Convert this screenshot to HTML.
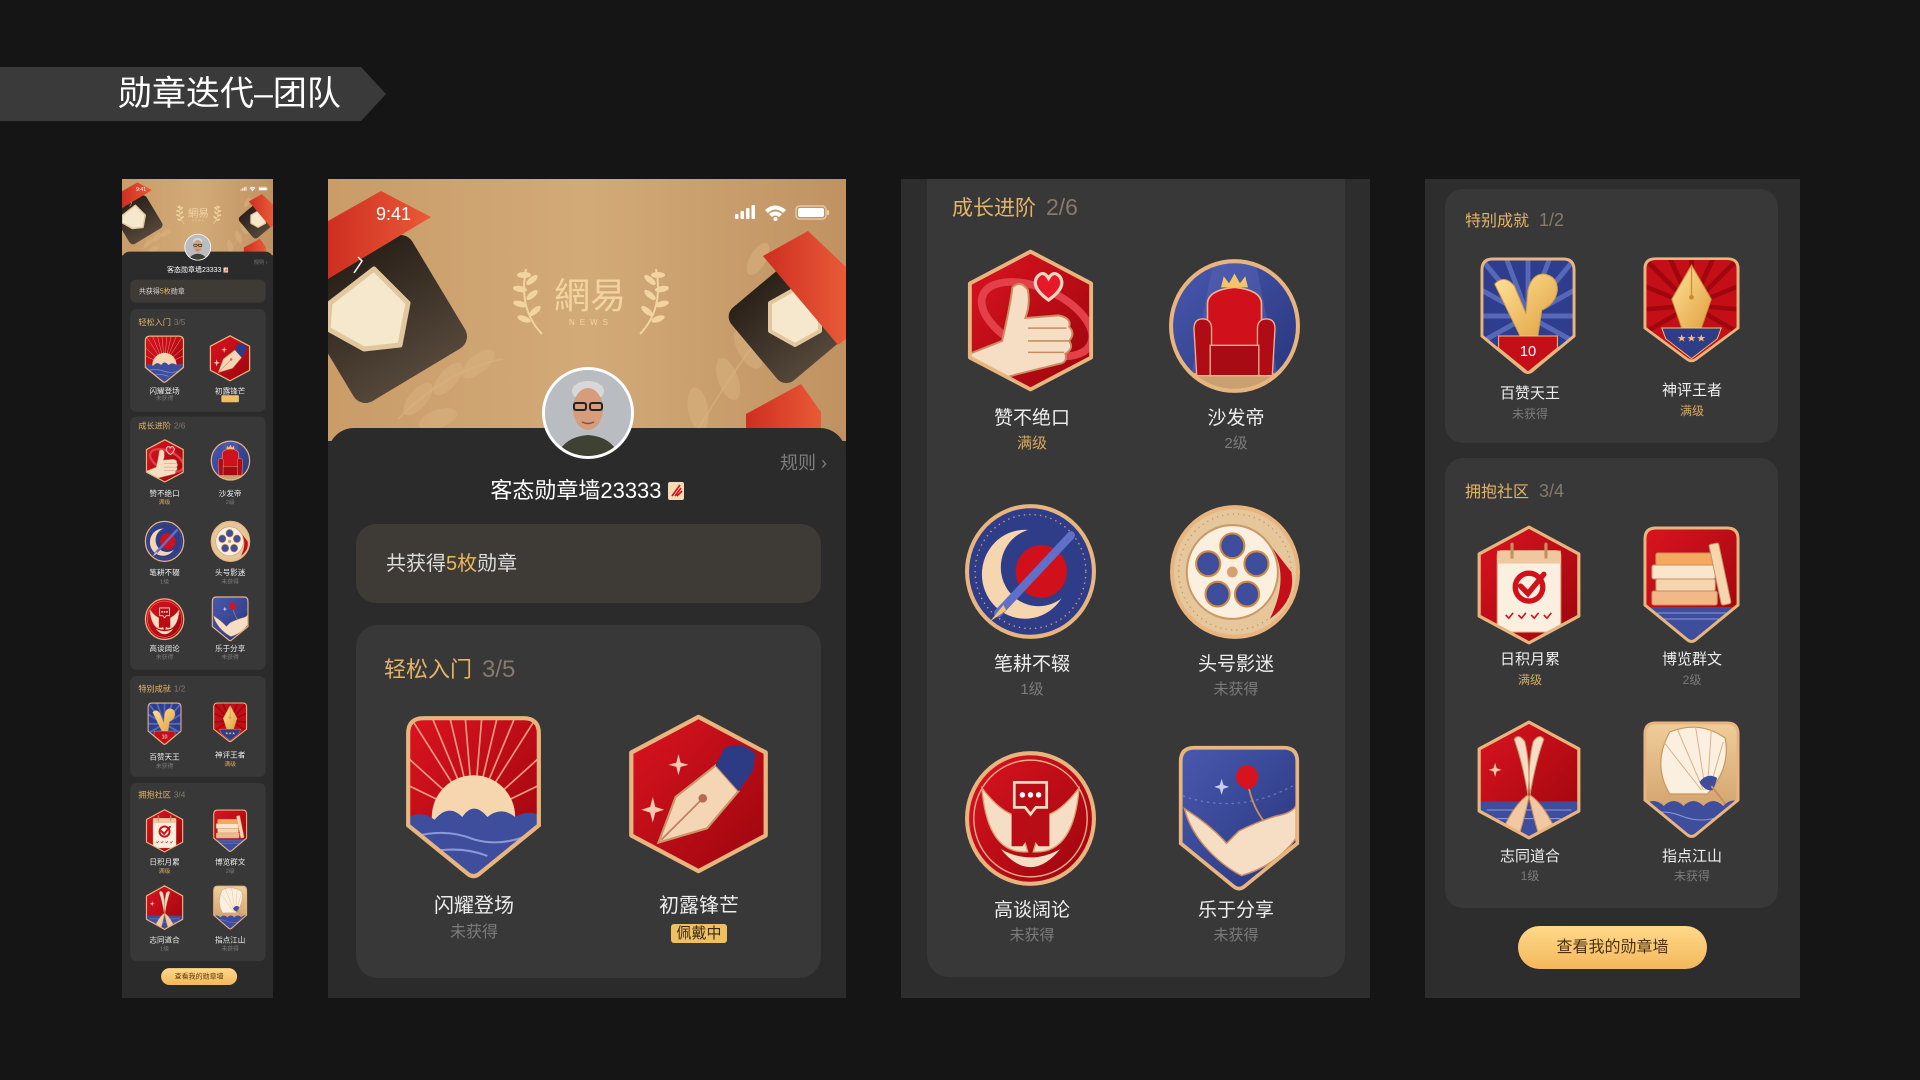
<!DOCTYPE html>
<html><head><meta charset="utf-8">
<style>
*{margin:0;padding:0;box-sizing:border-box}
body{width:1920px;height:1080px;background:#151515;position:relative;overflow:hidden;font-family:"Liberation Sans","Noto Sans CJK SC",sans-serif}
.a{position:absolute}
.bd{position:absolute;overflow:visible}
.l{position:absolute;width:240px;margin-left:-120px;text-align:center;color:#eee;white-space:nowrap}
.s{position:absolute;width:240px;margin-left:-120px;text-align:center;color:#7b7b7b;white-space:nowrap}
.g{color:#d8a95e}
.card{position:absolute;background:#383838;border-radius:22px}
.tt{position:absolute;color:#e3b468;white-space:nowrap}
.tt span{color:#857a6c;margin-left:10px}
</style></head><body>
<svg width="0" height="0" style="position:absolute">
<defs>
<linearGradient id="gR" x1="0" y1="0" x2="1" y2="1"><stop offset="0" stop-color="#dc1420"/><stop offset="1" stop-color="#9a050d"/></linearGradient>
<linearGradient id="gB" x1="0" y1="0" x2="1" y2="1"><stop offset="0" stop-color="#4a5ab0"/><stop offset="1" stop-color="#26337a"/></linearGradient>
<linearGradient id="gG" x1="0" y1="0" x2="1" y2="1"><stop offset="0" stop-color="#ffe39a"/><stop offset="1" stop-color="#e0a040"/></linearGradient>
<linearGradient id="gT" x1="0" y1="0" x2="0" y2="1"><stop offset="0" stop-color="#f0cf9c"/><stop offset="1" stop-color="#c9955e"/></linearGradient>
<linearGradient id="gHd" x1="0" y1="0" x2="1" y2="0"><stop offset="0" stop-color="#c99c68"/><stop offset=".5" stop-color="#d2aa78"/><stop offset="1" stop-color="#c09262"/></linearGradient>
<linearGradient id="gDk" x1="0" y1="0" x2="0" y2="1"><stop offset="0" stop-color="#2a2119"/><stop offset="1" stop-color="#54473a"/></linearGradient>
<linearGradient id="gRd" x1="0" y1="0" x2="1" y2="0"><stop offset="0" stop-color="#cf2e20"/><stop offset="1" stop-color="#e85a38"/></linearGradient>
<clipPath id="cS"><path d="M14 3H86Q97 3 97 14V80L54 115Q50 118 46 115L3 80V14Q3 3 14 3Z"/></clipPath>
<clipPath id="cH"><path d="M50 2L97 27V85L50 110L3 85V27Z"/></clipPath>
<clipPath id="cC"><circle cx="50" cy="50" r="47"/></clipPath>

<g id="sun"><g clip-path="url(#cS)"><rect width="100" height="120" fill="url(#gR)"/>
<path d="M50 74L-10 45M50 74L-10 20M50 74L0 -5M50 74L15 -10M50 74L30 -10M50 74L43 -10M50 74L57 -10M50 74L70 -10M50 74L85 -10M50 74L100 -5M50 74L110 20M50 74L110 45" stroke="#f39a80" stroke-width="1.2"/>
<circle cx="50" cy="74" r="30" fill="#f5d6ae"/>
<path d="M0 76Q12 68 22 76Q32 64 42 74Q50 62 60 74Q70 66 80 74Q90 68 100 74V120H0Z" fill="#3f4e9c"/>
<path d="M8 88Q30 82 50 90Q70 96 92 86M14 100Q40 94 60 102" stroke="#8a98d8" fill="none" stroke-width="1.5"/></g>
<path d="M14 3H86Q97 3 97 14V80L54 115Q50 118 46 115L3 80V14Q3 3 14 3Z" fill="none" stroke="#e9b57f" stroke-width="3"/></g>

<g id="pen"><g clip-path="url(#cH)"><rect width="100" height="112" fill="url(#gR)"/>
<path d="M22 90L34 58L62 36L78 54L56 80Z" fill="#f4d6b4" stroke="#c9956a" stroke-width="1.5"/>
<path d="M62 36L68 24Q80 18 90 28L88 40L78 54Z" fill="#2d3b85"/>
<path d="M24 88L52 60" stroke="#c08060" stroke-width="1.2"/><circle cx="53" cy="59" r="3" fill="#b86a50"/>
<path d="M36 28L37.5 34L43 35.5L37.5 37L36 43L34.5 37L29 35.5L34.5 34Z" fill="#f8c8b0"/>
<path d="M18 58L19.8 65L26 67L19.8 69L18 76L16.2 69L10 67L16.2 65Z" fill="#f8c8b0"/></g>
<path d="M50 2L97 27V85L50 110L3 85V27Z" fill="none" stroke="#e9b57f" stroke-width="3" stroke-linejoin="round"/></g>

<g id="thumb"><g clip-path="url(#cH)"><rect width="100" height="112" fill="url(#gR)"/>
<ellipse cx="55" cy="55" rx="46" ry="24" transform="rotate(25 55 55)" fill="none" stroke="#e4404a" stroke-width="6"/>
<path d="M-2 84L28 72Q34 46 36 30Q42 24 48 32Q50 44 46 54L72 52Q82 54 80 61Q85 66 80 72Q84 78 77 82Q79 89 72 90L40 98L0 110Z" fill="#f6dec4" stroke="#c98d62" stroke-width="1.5"/>
<path d="M48 62H78M48 72H80M48 81H76" stroke="#c98d62" stroke-width="1.2"/>
<path d="M64 40Q50 30 55 22Q60 16 64 23Q68 16 73 22Q78 30 64 40Z" fill="#e8182a" stroke="#f5d8c0" stroke-width="2.5"/></g>
<path d="M50 2L97 27V85L50 110L3 85V27Z" fill="none" stroke="#e9b57f" stroke-width="3" stroke-linejoin="round"/></g>

<g id="sofa"><g clip-path="url(#cC)"><rect width="100" height="100" fill="url(#gB)"/>
<path d="M35 0H65L85 100H15Z" fill="#5564b4" opacity=".5"/>
<rect x="0" y="84" width="100" height="16" fill="#c9a070"/>
<path d="M30 34Q30 24 50 22Q70 24 70 34V72H30Z" fill="#d0101a" stroke="#f2b090" stroke-width="1.2"/>
<path d="M20 52Q20 44 28 45Q33 46 33 52V86H22Z" fill="#b00c16" stroke="#f2b090" stroke-width="1"/>
<path d="M80 52Q80 44 72 45Q67 46 67 52V86H78Z" fill="#b00c16" stroke="#f2b090" stroke-width="1"/>
<rect x="32" y="64" width="36" height="22" fill="#a80b14" stroke="#f2b090" stroke-width="1"/>
<path d="M40 22L42 14L46 19L50 12L54 19L58 14L60 22Z" fill="#f4c46a"/></g>
<circle cx="50" cy="50" r="47" fill="none" stroke="#e9b57f" stroke-width="3"/></g>

<g id="moon"><circle cx="50" cy="50" r="47" fill="#2f3c88"/>
<circle cx="50" cy="50" r="41" fill="none" stroke="#c9a070" stroke-width="1" stroke-dasharray="1 3"/>
<circle cx="46" cy="52" r="32" fill="#f5d6ae"/><circle cx="56" cy="47" r="28" fill="#2f3c88"/>
<circle cx="58" cy="50" r="19" fill="#d0101a"/>
<path d="M26 80L80 24" stroke="#6070c8" stroke-width="6" stroke-linecap="round"/>
<path d="M20 86L30 74L32 78Z" fill="#f4c46a"/>
<circle cx="50" cy="50" r="47" fill="none" stroke="#e9b57f" stroke-width="3"/></g>

<g id="film"><circle cx="50" cy="50" r="47" fill="#e6c79c"/>
<circle cx="50" cy="50" r="42" fill="none" stroke="#c99a66" stroke-width="1" stroke-dasharray="1 3"/>
<path d="M76 30Q92 52 76 84Q96 70 92 50Z" fill="#c40f18"/>
<circle cx="48" cy="50" r="34" fill="#fbf0e0" stroke="#c99a66" stroke-width="1.5"/>
<g fill="#3f4e9c" stroke="#d08a40" stroke-width="1.5"><circle cx="48" cy="31" r="9"/><circle cx="66" cy="44" r="9"/><circle cx="59" cy="66" r="9"/><circle cx="37" cy="66" r="9"/><circle cx="30" cy="44" r="9"/></g>
<circle cx="48" cy="50" r="4" fill="#d8a070"/>
<circle cx="50" cy="50" r="47" fill="none" stroke="#e9b57f" stroke-width="3"/></g>

<g id="wings"><circle cx="50" cy="50" r="47" fill="url(#gR)"/>
<circle cx="50" cy="50" r="42" fill="none" stroke="#f2b090" stroke-width="1"/>
<path d="M48 74Q18 76 14 28Q28 46 40 48Z" fill="#f6dec4" stroke="#d9a070" stroke-width="1"/>
<path d="M52 74Q82 76 86 28Q72 46 60 48Z" fill="#f6dec4" stroke="#d9a070" stroke-width="1"/>
<path d="M28 72Q50 98 72 72Q50 84 28 72Z" fill="#f6dec4"/>
<path d="M36 46H64V70H56L50 62L44 70H36Z" fill="#b80c16"/>
<path d="M38 24H62V42H54L50 47L46 42H38Z" fill="#b80c16" stroke="#f6dec4" stroke-width="2"/>
<circle cx="44" cy="33" r="2" fill="#fff"/><circle cx="50" cy="33" r="2" fill="#fff"/><circle cx="56" cy="33" r="2" fill="#fff"/>
<circle cx="50" cy="50" r="47" fill="none" stroke="#e9b57f" stroke-width="3"/></g>

<g id="rose"><g clip-path="url(#cS)"><rect width="100" height="120" fill="url(#gB)"/>
<path d="M0 40Q50 60 100 30" stroke="#6a78c8" stroke-width="1" fill="none" stroke-dasharray="2 3"/>
<path d="M6 52Q28 66 40 80L50 70Q66 62 80 58Q92 56 96 50V76Q80 98 52 106Q36 98 22 82Q10 68 6 52Z" fill="#f6dec4" stroke="#c98d62" stroke-width="1.2"/>
<path d="M58 36Q62 52 70 62" stroke="#c98d62" stroke-width="1.5" fill="none"/>
<path d="M48 24Q52 14 60 18Q68 22 64 32Q58 40 52 34Q46 30 48 24Z" fill="#d8121e"/>
<path d="M36 28L37.5 33L42 34.5L37.5 36L36 41L34.5 36L30 34.5L34.5 33Z" fill="#c8cff0"/></g>
<path d="M14 3H86Q97 3 97 14V80L54 115Q50 118 46 115L3 80V14Q3 3 14 3Z" fill="none" stroke="#e9b57f" stroke-width="3"/></g>

<g id="troph"><g clip-path="url(#cS)"><rect width="100" height="120" fill="#2e3d8e"/>
<path d="M50 60L0 0M50 60L25 -5M50 60L50 -5M50 60L75 -5M50 60L100 0M50 60L105 30M50 60L105 60M50 60L105 90M50 60L-5 30M50 60L-5 60M50 60L-5 90" stroke="#5868b8" stroke-width="5"/>
<path d="M16 28Q26 18 36 30L48 58L50 34Q54 18 66 18Q80 20 80 34Q78 48 64 54L60 80H42Z" fill="url(#gG)" stroke="#d8a040" stroke-width="1"/>
<path d="M20 80H80V92L50 116L20 92Z" fill="#c40f18" stroke="#f4c46a" stroke-width="1"/>
<text x="50" y="100" text-anchor="middle" font-size="15" fill="#fff" font-family="Liberation Sans,sans-serif">10</text></g>
<path d="M14 3H86Q97 3 97 14V80L54 115Q50 118 46 115L3 80V14Q3 3 14 3Z" fill="none" stroke="#e9b57f" stroke-width="3"/></g>

<g id="gpen"><g clip-path="url(#cS)"><rect width="100" height="120" fill="#c40f18"/>
<path d="M50 55L0 0M50 55L25 -5M50 55L50 -5M50 55L75 -5M50 55L100 0M50 55L105 30M50 55L105 60M50 55L105 90M50 55L-5 30M50 55L-5 60M50 55L-5 90" stroke="#a0060e" stroke-width="5"/>
<path d="M50 10L70 48L60 80H40L30 48Z" fill="url(#gG)" stroke="#c98a30" stroke-width="1"/>
<path d="M50 12V44" stroke="#c98a30" stroke-width="1.2"/><circle cx="50" cy="46" r="2.5" fill="#c98a30"/>
<path d="M20 80H80L76 92L50 114L24 92Z" fill="#2f3c88" stroke="#f4c46a" stroke-width="1"/>
<text x="50" y="95" text-anchor="middle" font-size="11" fill="#f4c46a" font-family="DejaVu Sans,sans-serif">★★★</text></g>
<path d="M14 3H86Q97 3 97 14V80L54 115Q50 118 46 115L3 80V14Q3 3 14 3Z" fill="none" stroke="#e9b57f" stroke-width="3"/></g>

<g id="cal"><g clip-path="url(#cH)"><rect width="100" height="112" fill="url(#gR)"/>
<rect x="20" y="24" width="60" height="76" rx="4" fill="#fbf0e0" stroke="#d9a070" stroke-width="1"/>
<rect x="20" y="24" width="60" height="12" fill="#f0c8a0"/>
<path d="M34 18V30M66 18V30" stroke="#c98d62" stroke-width="3" stroke-linecap="round"/>
<circle cx="50" cy="58" r="13" fill="none" stroke="#d0101a" stroke-width="5"/>
<path d="M42 57L49 64L64 46" fill="none" stroke="#d0101a" stroke-width="5" stroke-linecap="round"/>
<path d="M28 84L31 87L35 82M40 84L43 87L47 82M52 84L55 87L59 82M64 84L67 87L71 82" stroke="#d0101a" stroke-width="1.5" fill="none"/></g>
<path d="M50 2L97 27V85L50 110L3 85V27Z" fill="none" stroke="#e9b57f" stroke-width="3" stroke-linejoin="round"/></g>

<g id="books"><g clip-path="url(#cS)"><rect width="100" height="120" fill="url(#gR)"/>
<rect x="14" y="28" width="58" height="12" rx="2" fill="#f5a860" stroke="#c98d62"/>
<rect x="10" y="40" width="64" height="14" rx="2" fill="#fbe6cc" stroke="#c98d62"/>
<rect x="14" y="54" width="60" height="12" rx="2" fill="#f5d6ae" stroke="#c98d62"/>
<rect x="10" y="66" width="66" height="14" rx="2" fill="#f2b888" stroke="#c98d62"/>
<rect x="74" y="18" width="10" height="62" rx="2" transform="rotate(-12 79 50)" fill="#f5d6ae" stroke="#c98d62"/>
<rect x="0" y="82" width="100" height="40" fill="#3f4e9c"/>
<path d="M0 88H100M0 94H100" stroke="#8a98d8" stroke-width="1"/></g>
<path d="M14 3H86Q97 3 97 14V80L54 115Q50 118 46 115L3 80V14Q3 3 14 3Z" fill="none" stroke="#e9b57f" stroke-width="3"/></g>

<g id="pray"><g clip-path="url(#cH)"><rect width="100" height="112" fill="url(#gR)"/>
<rect x="0" y="76" width="100" height="40" fill="#3f4e9c"/>
<path d="M10 84H90M20 92H80" stroke="#8a98d8" stroke-width="1"/>
<path d="M49 70Q44 40 36 18Q40 12 46 20Q50 36 50 56Z" fill="#f6dec4" stroke="#c98d62"/>
<path d="M51 70Q56 40 64 18Q60 12 54 20Q50 36 50 56Z" fill="#f6dec4" stroke="#c98d62"/>
<path d="M49 70Q34 80 22 110H40Q46 90 50 72Z" fill="#f2c8a0" stroke="#c98d62"/>
<path d="M51 70Q66 80 78 110H60Q54 90 50 72Z" fill="#f2c8a0" stroke="#c98d62"/>
<path d="M18 40L19.5 45L24 46.5L19.5 48L18 53L16.5 48L12 46.5L16.5 45Z" fill="#f8c8b0"/></g>
<path d="M50 2L97 27V85L50 110L3 85V27Z" fill="none" stroke="#e9b57f" stroke-width="3" stroke-linejoin="round"/></g>

<g id="fan"><g clip-path="url(#cS)"><rect width="100" height="120" fill="url(#gT)"/>
<path d="M28 74Q10 44 28 12Q58 0 84 18Q90 48 66 74Z" fill="#fbf0e0" stroke="#c9955e" stroke-width="1.2"/>
<path d="M60 70L22 22M62 70L36 10M64 70L54 6M66 70L70 10M68 70L82 22" stroke="#d9b088" stroke-width="1"/>
<path d="M58 62Q66 52 76 58L72 70Q64 72 58 62Z" fill="#3f4e9c"/><path d="M70 66L86 86" stroke="#c98d62" stroke-width="2"/>
<path d="M0 86Q12 76 22 86Q32 76 42 86Q52 76 62 86Q72 76 82 86Q92 76 100 84V120H0Z" fill="#3f4e9c"/>
<path d="M0 96Q20 88 40 96T80 96T100 94" stroke="#8a98d8" fill="none" stroke-width="1"/></g>
<path d="M14 3H86Q97 3 97 14V80L54 115Q50 118 46 115L3 80V14Q3 3 14 3Z" fill="none" stroke="#e9b57f" stroke-width="3"/></g>

<g id="hdr">
<rect width="518" height="262" fill="url(#gHd)"/>
<g fill="#d9b380" opacity=".55">
<ellipse cx="90" cy="220" rx="9" ry="20" transform="rotate(40 90 220)"/><ellipse cx="120" cy="200" rx="9" ry="20" transform="rotate(40 120 200)"/><ellipse cx="150" cy="185" rx="9" ry="20" transform="rotate(50 150 185)"/><ellipse cx="110" cy="240" rx="9" ry="20" transform="rotate(70 110 240)"/>
<ellipse cx="400" cy="200" rx="10" ry="22" transform="rotate(-20 400 200)"/><ellipse cx="420" cy="170" rx="10" ry="22" transform="rotate(-30 420 170)"/><ellipse cx="370" cy="230" rx="10" ry="22" transform="rotate(-10 370 230)"/><ellipse cx="430" cy="80" rx="8" ry="18" transform="rotate(30 430 80)"/></g>
<path d="M70 240Q120 190 175 180M370 250Q400 200 430 160" stroke="#d9b380" stroke-width="2" fill="none" opacity=".6"/>
<rect x="-10" y="75" width="130" height="130" rx="14" fill="url(#gDk)" transform="rotate(-31 55 140)"/>
<path d="M2 124L46 90L80 124L72 166L36 170L0 150Z" fill="#f6e8cc" stroke="#e2c79e" stroke-width="5" stroke-linejoin="round"/>
<path d="M0 42L53 12L103 38L0 100Z" fill="url(#gRd)"/>
<path d="M26 94L34 82L30 78" stroke="#fff" stroke-width="1.5" fill="none"/>
<rect x="415" y="95" width="95" height="95" rx="12" fill="url(#gDk)" transform="rotate(-40 462 142)"/>
<path d="M467 110L492 124V152L467 166L442 152V124Z" fill="#f6e8cc" stroke="#e2c79e" stroke-width="4" stroke-linejoin="round"/>
<path d="M435 77L480 52L518 88V160L510 166Z" fill="url(#gRd)"/>
<path d="M418 235L473 205L493 233V262H418Z" fill="url(#gRd)"/>
<g fill="none" stroke="#f2d4a0" stroke-width="2">
<path d="M214 155Q190 130 198 90"/><path d="M312 155Q336 130 328 90"/></g>
<g fill="#f2d4a0">
<ellipse cx="196" cy="140" rx="7" ry="3" transform="rotate(20 196 140)"/><ellipse cx="192" cy="125" rx="7" ry="3" transform="rotate(15 192 125)"/><ellipse cx="192" cy="110" rx="7" ry="3" transform="rotate(10 192 110)"/><ellipse cx="196" cy="96" rx="7" ry="3" transform="rotate(0 196 96)"/><ellipse cx="207" cy="132" rx="7" ry="3" transform="rotate(-40 207 132)"/><ellipse cx="204" cy="116" rx="7" ry="3" transform="rotate(-40 204 116)"/><ellipse cx="204" cy="101" rx="7" ry="3" transform="rotate(-40 204 101)"/>
<ellipse cx="330" cy="140" rx="7" ry="3" transform="rotate(-20 330 140)"/><ellipse cx="334" cy="125" rx="7" ry="3" transform="rotate(-15 334 125)"/><ellipse cx="334" cy="110" rx="7" ry="3" transform="rotate(-10 334 110)"/><ellipse cx="330" cy="96" rx="7" ry="3"/><ellipse cx="319" cy="132" rx="7" ry="3" transform="rotate(40 319 132)"/><ellipse cx="322" cy="116" rx="7" ry="3" transform="rotate(40 322 116)"/><ellipse cx="322" cy="101" rx="7" ry="3" transform="rotate(40 322 101)"/></g>
<text x="262" y="129" text-anchor="middle" font-size="36" fill="#f2d4a0" font-family="Noto Sans CJK TC,sans-serif">網易</text>
<text x="263" y="146" text-anchor="middle" font-size="8" letter-spacing="5" fill="#f2d4a0" font-family="Liberation Sans,sans-serif">NEWS</text>
<text x="48" y="41" font-size="18" fill="#fff" font-family="Liberation Sans,sans-serif">9:41</text>
<g fill="#fff"><rect x="407" y="35" width="3.5" height="5" rx="1"/><rect x="412.5" y="32" width="3.5" height="8" rx="1"/><rect x="418" y="29" width="3.5" height="11" rx="1"/><rect x="423.5" y="26" width="3.5" height="14" rx="1"/>
<path d="M437 31Q447 22 458 31L455 34Q447 27 440 34Z"/><path d="M441 35Q447 30 454 35L451 38Q447 35 444 38Z"/><circle cx="447.5" cy="40" r="2"/>
<rect x="468" y="27" width="30" height="13" rx="3.5" fill="none" stroke="#e9d2b0" stroke-width="1.2"/><rect x="470" y="29" width="26" height="9" rx="2"/><rect x="499" y="31" width="2" height="5" rx="1" fill="#e9d2b0"/></g>
</g>
<g id="ava">
<circle cx="46" cy="46" r="46" fill="#fff"/>
<circle cx="46" cy="46" r="43" fill="#c4c7ca"/>
<clipPath id="cA"><circle cx="46" cy="46" r="43"/></clipPath>
<g clip-path="url(#cA)">
<rect x="0" y="0" width="92" height="92" fill="#b9bcc0"/>
<path d="M14 92Q20 70 46 68Q72 70 78 92Z" fill="#3f4232"/>
<ellipse cx="46" cy="24" rx="16" ry="10" fill="#d8d8d8"/>
<ellipse cx="46" cy="42" rx="15" ry="21" fill="#d69d7c"/>
<rect x="32" y="36" width="12" height="7" rx="2" fill="none" stroke="#222" stroke-width="2"/><rect x="48" y="36" width="12" height="7" rx="2" fill="none" stroke="#222" stroke-width="2"/>
<path d="M40 55Q46 58 52 55" stroke="#8a5040" stroke-width="1.5" fill="none"/></g>
</g>
<g id="nicon"><rect x="0" y="0" width="16" height="18" rx="2" fill="#f3dcb4"/><path d="M4 14L12 3M7 14L13 6M9 14L14 9" stroke="#d0101a" stroke-width="1.6"/></g>
</defs></svg>

<!-- Title banner -->
<svg class="a" style="left:0;top:67px" width="390" height="54"><path d="M0 0H361L386 27L361 54H0Z" fill="#3a3a3a"/></svg>
<div class="a" style="left:118px;top:73px;font-size:34px;line-height:42px;color:#fff">勋章迭代–团队</div>

<!-- Phone 1 (small, scaled) -->
<div class="a" style="left:122px;top:179px;width:151px;height:819px;overflow:hidden;background:#2b2b2b">
<div class="a" style="left:0;top:0;width:518px;height:2810px;transform:scale(0.2915);transform-origin:0 0">
<svg class="a" style="left:0;top:0" width="518" height="262"><use href="#hdr"/></svg>
<div class="a" style="left:0;top:249px;width:518px;height:2600px;background:#2b2b2b;border-radius:26px 26px 0 0"></div>
<svg class="a" style="left:214px;top:188px" width="92" height="92"><use href="#ava"/></svg>
<div class="a" style="left:452px;top:272px;font-size:18px;color:#777">规则 ›</div>
<div class="a" style="left:0;width:518px;top:296px;text-align:center;font-size:24px;line-height:32px;color:#fff">客态勋章墙23333 <svg width="16" height="18" style="vertical-align:-2px"><use href="#nicon"/></svg></div>
<div class="a" style="left:28px;top:345px;width:465px;height:79px;background:#3e3a35;border-radius:20px"></div>
<div class="a" style="left:58px;top:370px;font-size:24px;line-height:30px;color:#ddd">共获得<span style="color:#e8b860">5枚</span>勋章</div>
<div class="card" style="left:28px;top:446px;width:465px;height:353px"></div>
<div class="tt" style="left:56px;top:474px;font-size:28px;line-height:34px">轻松入门<span>3/5</span></div>
<svg class="bd" style="left:76px;top:535px" width="139" height="167" viewBox="0 0 100 120" preserveAspectRatio="none"><use href="#sun"/></svg>
<svg class="bd" style="left:299px;top:535px" width="143" height="160" viewBox="0 0 100 112" preserveAspectRatio="none"><use href="#pen"/></svg>
<div class="l" style="left:146px;top:710px;font-size:26px;line-height:32px">闪耀登场</div><div class="s" style="left:146px;top:740px;font-size:20px;line-height:26px">未获得</div>
<div class="l" style="left:371px;top:710px;font-size:26px;line-height:32px">初露锋芒</div><div class="a" style="left:341px;top:742px;width:60px;height:24px;background:#f0c060;border-radius:3px"></div>

<div class="card" style="left:28px;top:815px;width:465px;height:869px"></div>
<div class="tt" style="left:56px;top:830px;font-size:28px;line-height:34px">成长进阶<span>2/6</span></div>
<svg class="bd" style="left:80px;top:892px" width="134" height="150" viewBox="0 0 100 112" preserveAspectRatio="none"><use href="#thumb"/></svg>
<svg class="bd" style="left:302px;top:895px" width="140" height="142" viewBox="0 0 100 100" preserveAspectRatio="none"><use href="#sofa"/></svg>
<div class="l" style="left:146px;top:1062px;font-size:26px;line-height:32px">赞不绝口</div><div class="s g" style="left:146px;top:1092px;font-size:20px">满级</div>
<div class="l" style="left:371px;top:1062px;font-size:26px;line-height:32px">沙发帝</div><div class="s" style="left:371px;top:1092px;font-size:20px">2级</div>
<svg class="bd" style="left:76px;top:1170px" width="140" height="146" viewBox="0 0 100 100" preserveAspectRatio="none"><use href="#moon"/></svg>
<svg class="bd" style="left:302px;top:1170px" width="140" height="146" viewBox="0 0 100 100" preserveAspectRatio="none"><use href="#film"/></svg>
<div class="l" style="left:146px;top:1333px;font-size:26px;line-height:32px">笔耕不辍</div><div class="s" style="left:146px;top:1365px;font-size:20px">1级</div>
<div class="l" style="left:371px;top:1333px;font-size:26px;line-height:32px">头号影迷</div><div class="s" style="left:371px;top:1365px;font-size:20px">未获得</div>
<svg class="bd" style="left:76px;top:1436px" width="140" height="148" viewBox="0 0 100 100" preserveAspectRatio="none"><use href="#wings"/></svg>
<svg class="bd" style="left:306px;top:1430px" width="130" height="158" viewBox="0 0 100 120" preserveAspectRatio="none"><use href="#rose"/></svg>
<div class="l" style="left:146px;top:1594px;font-size:26px;line-height:32px">高谈阔论</div><div class="s" style="left:146px;top:1624px;font-size:20px">未获得</div>
<div class="l" style="left:371px;top:1594px;font-size:26px;line-height:32px">乐于分享</div><div class="s" style="left:371px;top:1624px;font-size:20px">未获得</div>

<div class="card" style="left:28px;top:1705px;width:465px;height:346px"></div>
<div class="tt" style="left:56px;top:1733px;font-size:28px;line-height:34px">特别成就<span>1/2</span></div>
<svg class="bd" style="left:86px;top:1794px" width="120" height="150" viewBox="0 0 100 120" preserveAspectRatio="none"><use href="#troph"/></svg>
<svg class="bd" style="left:311px;top:1794px" width="120" height="140" viewBox="0 0 100 120" preserveAspectRatio="none"><use href="#gpen"/></svg>
<div class="l" style="left:146px;top:1967px;font-size:26px;line-height:32px">百赞天王</div><div class="s" style="left:146px;top:1997px;font-size:20px">未获得</div>
<div class="l" style="left:371px;top:1960px;font-size:26px;line-height:32px">神评王者</div><div class="s g" style="left:371px;top:1990px;font-size:20px">满级</div>

<div class="card" style="left:28px;top:2072px;width:465px;height:611px"></div>
<div class="tt" style="left:56px;top:2096px;font-size:28px;line-height:34px">拥抱社区<span>3/4</span></div>
<svg class="bd" style="left:80px;top:2161px" width="132" height="150" viewBox="0 0 100 112" preserveAspectRatio="none"><use href="#cal"/></svg>
<svg class="bd" style="left:311px;top:2161px" width="120" height="150" viewBox="0 0 100 120" preserveAspectRatio="none"><use href="#books"/></svg>
<div class="l" style="left:146px;top:2327px;font-size:26px;line-height:32px">日积月累</div><div class="s g" style="left:146px;top:2357px;font-size:20px">满级</div>
<div class="l" style="left:371px;top:2327px;font-size:26px;line-height:32px">博览群文</div><div class="s" style="left:371px;top:2357px;font-size:20px">2级</div>
<svg class="bd" style="left:80px;top:2422px" width="132" height="155" viewBox="0 0 100 112" preserveAspectRatio="none"><use href="#pray"/></svg>
<svg class="bd" style="left:311px;top:2422px" width="120" height="155" viewBox="0 0 100 120" preserveAspectRatio="none"><use href="#fan"/></svg>
<div class="l" style="left:146px;top:2594px;font-size:26px;line-height:32px">志同道合</div><div class="s" style="left:146px;top:2624px;font-size:20px">1级</div>
<div class="l" style="left:371px;top:2594px;font-size:26px;line-height:32px">指点江山</div><div class="s" style="left:371px;top:2624px;font-size:20px">未获得</div>
<div class="a" style="left:134px;top:2707px;width:261px;height:58px;border-radius:29px;background:linear-gradient(180deg,#ffd98a,#f3b85c);color:#5a3a10;font-size:24px;line-height:58px;text-align:center">查看我的勋章墙</div>
</div></div>

<!-- Phone 2 -->
<div class="a" style="left:328px;top:179px;width:518px;height:819px;overflow:hidden;background:#2b2b2b">
<svg class="a" style="left:0;top:0" width="518" height="262"><use href="#hdr"/></svg>
<div class="a" style="left:0;top:249px;width:518px;height:600px;background:#2b2b2b;border-radius:26px 26px 0 0"></div>
<svg class="a" style="left:214px;top:188px" width="92" height="92"><use href="#ava"/></svg>
<div class="a" style="left:452px;top:272px;font-size:18px;line-height:24px;color:#7d7d7d">规则 ›</div>
<div class="a" style="left:0;width:518px;top:298px;text-align:center;font-size:22px;line-height:28px;color:#fff">客态勋章墙23333 <svg width="16" height="18" style="vertical-align:-2px"><use href="#nicon"/></svg></div>
<div class="a" style="left:28px;top:345px;width:465px;height:79px;background:#3e3a35;border-radius:20px"></div>
<div class="a" style="left:58px;top:372px;font-size:20px;line-height:26px;color:#ddd">共获得<span style="color:#e8b860">5枚</span>勋章</div>
<div class="card" style="left:28px;top:446px;width:465px;height:353px"></div>
<div class="tt" style="left:56px;top:477px;font-size:22px;line-height:28px">轻松入门<span style="font-size:24px">3/5</span></div>
<svg class="bd" style="left:76px;top:535px" width="139" height="167" viewBox="0 0 100 120" preserveAspectRatio="none"><use href="#sun"/></svg>
<svg class="bd" style="left:299px;top:535px" width="143" height="160" viewBox="0 0 100 112" preserveAspectRatio="none"><use href="#pen"/></svg>
<div class="l" style="left:146px;top:714px;font-size:20px;line-height:26px">闪耀登场</div>
<div class="s" style="left:146px;top:744px;font-size:16px;line-height:20px">未获得</div>
<div class="l" style="left:371px;top:714px;font-size:20px;line-height:26px">初露锋芒</div>
<div class="a" style="left:343px;top:745px;width:56px;height:19px;background:#f0c060;border-radius:3px;color:#3a2a10;font-size:15px;line-height:19px;text-align:center">佩戴中</div>
</div>

<!-- Panel 3 -->
<div class="a" style="left:901px;top:179px;width:469px;height:819px;overflow:hidden;background:#2d2d2d">
<div class="card" style="left:26px;top:-30px;width:418px;height:828px"></div>
</div>
<div class="tt" style="left:952px;top:193px;font-size:21px;line-height:28px">成长进阶<span style="font-size:23px">2/6</span></div>
<svg class="bd" style="left:966px;top:249px" width="129" height="143" viewBox="0 0 100 112" preserveAspectRatio="none"><use href="#thumb"/></svg>
<svg class="bd" style="left:1167px;top:257px" width="135" height="138" viewBox="0 0 100 100" preserveAspectRatio="none"><use href="#sofa"/></svg>
<div class="l" style="left:1032px;top:407px;font-size:19px;line-height:24px">赞不绝口</div><div class="s g" style="left:1032px;top:434px;font-size:15px;line-height:20px">满级</div>
<div class="l" style="left:1236px;top:407px;font-size:19px;line-height:24px">沙发帝</div><div class="s" style="left:1236px;top:434px;font-size:15px;line-height:20px">2级</div>
<svg class="bd" style="left:963px;top:502px" width="135" height="139" viewBox="0 0 100 100" preserveAspectRatio="none"><use href="#moon"/></svg>
<svg class="bd" style="left:1168px;top:503px" width="134" height="138" viewBox="0 0 100 100" preserveAspectRatio="none"><use href="#film"/></svg>
<div class="l" style="left:1032px;top:653px;font-size:19px;line-height:24px">笔耕不辍</div><div class="s" style="left:1032px;top:680px;font-size:15px;line-height:20px">1级</div>
<div class="l" style="left:1236px;top:653px;font-size:19px;line-height:24px">头号影迷</div><div class="s" style="left:1236px;top:680px;font-size:15px;line-height:20px">未获得</div>
<svg class="bd" style="left:963px;top:749px" width="135" height="139" viewBox="0 0 100 100" preserveAspectRatio="none"><use href="#wings"/></svg>
<svg class="bd" style="left:1177px;top:744px" width="124" height="149" viewBox="0 0 100 120" preserveAspectRatio="none"><use href="#rose"/></svg>
<div class="l" style="left:1032px;top:899px;font-size:19px;line-height:24px">高谈阔论</div><div class="s" style="left:1032px;top:926px;font-size:15px;line-height:20px">未获得</div>
<div class="l" style="left:1236px;top:899px;font-size:19px;line-height:24px">乐于分享</div><div class="s" style="left:1236px;top:926px;font-size:15px;line-height:20px">未获得</div>

<!-- Panel 4 -->
<div class="a" style="left:1425px;top:179px;width:375px;height:819px;background:#2d2d2d"></div>
<div class="card" style="left:1445px;top:189px;width:333px;height:254px;border-radius:18px"></div>
<div class="tt" style="left:1465px;top:209px;font-size:16px;line-height:22px">特别成就<span style="font-size:18px">1/2</span></div>
<svg class="bd" style="left:1479px;top:256px" width="98" height="120" viewBox="0 0 100 120" preserveAspectRatio="none"><use href="#troph"/></svg>
<svg class="bd" style="left:1642px;top:256px" width="99" height="108" viewBox="0 0 100 120" preserveAspectRatio="none"><use href="#gpen"/></svg>
<div class="l" style="left:1530px;top:384px;font-size:15px;line-height:20px">百赞天王</div><div class="s" style="left:1530px;top:406px;font-size:12px;line-height:16px">未获得</div>
<div class="l" style="left:1692px;top:381px;font-size:15px;line-height:20px">神评王者</div><div class="s g" style="left:1692px;top:403px;font-size:12px;line-height:16px">满级</div>
<div class="card" style="left:1445px;top:458px;width:333px;height:450px;border-radius:18px"></div>
<div class="tt" style="left:1465px;top:480px;font-size:16px;line-height:22px">拥抱社区<span style="font-size:18px">3/4</span></div>
<svg class="bd" style="left:1476px;top:525px" width="106" height="120" viewBox="0 0 100 112" preserveAspectRatio="none"><use href="#cal"/></svg>
<svg class="bd" style="left:1642px;top:525px" width="99" height="120" viewBox="0 0 100 120" preserveAspectRatio="none"><use href="#books"/></svg>
<div class="l" style="left:1530px;top:650px;font-size:15px;line-height:20px">日积月累</div><div class="s g" style="left:1530px;top:672px;font-size:12px;line-height:16px">满级</div>
<div class="l" style="left:1692px;top:650px;font-size:15px;line-height:20px">博览群文</div><div class="s" style="left:1692px;top:672px;font-size:12px;line-height:16px">2级</div>
<svg class="bd" style="left:1476px;top:720px" width="106" height="120" viewBox="0 0 100 112" preserveAspectRatio="none"><use href="#pray"/></svg>
<svg class="bd" style="left:1642px;top:720px" width="99" height="120" viewBox="0 0 100 120" preserveAspectRatio="none"><use href="#fan"/></svg>
<div class="l" style="left:1530px;top:847px;font-size:15px;line-height:20px">志同道合</div><div class="s" style="left:1530px;top:868px;font-size:12px;line-height:16px">1级</div>
<div class="l" style="left:1692px;top:847px;font-size:15px;line-height:20px">指点江山</div><div class="s" style="left:1692px;top:868px;font-size:12px;line-height:16px">未获得</div>
<div class="a" style="left:1518px;top:926px;width:189px;height:43px;border-radius:22px;background:linear-gradient(180deg,#ffd98a,#f3b85c);color:#4a3210;font-size:16px;line-height:43px;text-align:center">查看我的勋章墙</div>
</body></html>
